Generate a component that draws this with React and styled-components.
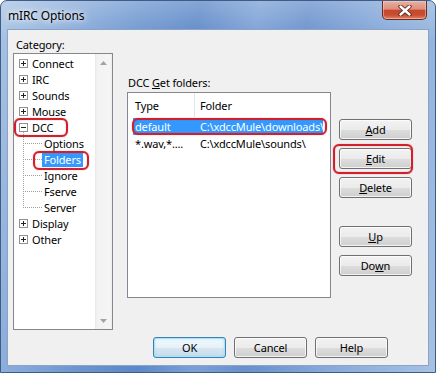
import React from "react";
import styled, { createGlobalStyle } from "styled-components";

const GlobalStyle = createGlobalStyle`
  html, body {
    margin: 0;
    padding: 0;
    background: #fff;
  }
  body {
    font-family: "Noto Sans", "Open Sans", sans-serif;
    font-size: 11px;
    letter-spacing: -0.15px;
    color: #000;
  }
`;

const Window = styled.div`
  width: 436px;
  height: 373px;
  box-sizing: border-box;
  border: 1px solid #3d5c86;
  border-radius: 7px 7px 0 0;
  background:
    linear-gradient(180deg, rgba(255, 255, 255, 0.25) 0%, rgba(255, 255, 255, 0) 40px),
    linear-gradient(
      100deg,
      #a9c3e3 0%,
      #8fb0dc 12%,
      #6d96cf 28%,
      #5c88c8 40%,
      #7ba0d5 52%,
      #6890cc 62%,
      #86a9d9 78%,
      #a6c1e3 100%
    );
  display: flex;
  flex-direction: column;
  overflow: hidden;
`;

const Titlebar = styled.div`
  height: 28px;
  flex: none;
  display: flex;
  align-items: flex-start;
  justify-content: space-between;
  padding: 0 8px 0 7px;
`;

const Title = styled.div`
  margin-top: 6px;
  font-size: 12px;
  color: #000;
  text-shadow: 0 0 5px #fff, 0 0 10px rgba(255, 255, 255, 0.9);
`;

const Close = styled.div`
  width: 45px;
  height: 19px;
  box-sizing: border-box;
  border: 1px solid #6b2c20;
  border-top: none;
  border-radius: 0 0 5px 5px;
  background: linear-gradient(
    180deg,
    #eab0a2 0%,
    #dc8f7c 45%,
    #c5482f 52%,
    #c94d31 78%,
    #e0866a 100%
  );
  box-shadow: inset 0 0 0 1px rgba(255, 220, 210, 0.45);
  display: flex;
  align-items: center;
  justify-content: center;
`;

const Body = styled.div`
  flex: 1;
  display: flex;
  padding: 0 6px 6px 6px;
`;

const Client = styled.div`
  flex: 1;
  display: flex;
  flex-direction: column;
  background: #f0f0f0;
  border: 1px solid #8ba3c4;
`;

const Main = styled.div`
  display: flex;
  align-items: flex-start;
  padding: 7px 0 0 5px;
`;

const LeftCol = styled.div`
  width: 100px;
  display: flex;
  flex-direction: column;
`;

const Label = styled.div`
  line-height: 16px;
  padding-left: ${(p) => p.$indent || 0}px;
  margin-bottom: ${(p) => p.$gap || 0}px;
`;

const Key = styled.span`
  text-decoration: underline;
`;

const Tree = styled.div`
  height: 277px;
  box-sizing: border-box;
  border: 1px solid #828790;
  background: #fff;
  display: flex;
`;

const TreeBody = styled.div`
  flex: 1;
  padding-top: 1px;
`;

const TreeRow = styled.div`
  height: 16px;
  display: flex;
  align-items: center;
`;

const Marked = styled.div`
  position: relative;
  display: flex;
  align-items: center;
`;

const Mark = styled.div`
  position: absolute;
  top: ${(p) => p.$t}px;
  left: ${(p) => p.$l}px;
  right: ${(p) => p.$r}px;
  bottom: ${(p) => p.$b}px;
  border: 2px solid #d1202b;
  border-radius: 6px;
  box-shadow: 0 0 1px rgba(210, 30, 40, 0.8), inset 0 0 1px rgba(210, 30, 40, 0.8);
  pointer-events: none;
`;

const NodeLabel = styled.span`
  padding: 0 2px;
  line-height: 15px;
  white-space: nowrap;
  background: ${(p) => (p.$selected ? "#3399ff" : "transparent")};
  color: ${(p) => (p.$selected ? "#fff" : "#000")};
`;

const Scrollbar = styled.div`
  width: 17px;
  flex: none;
  display: flex;
  flex-direction: column;
  justify-content: space-between;
  background: linear-gradient(90deg, #e6e6e6 0, #f3f3f3 2px, #f5f5f5 15px, #ececec 17px);
`;

const ScrollArrow = styled.div`
  height: 17px;
  display: flex;
  align-items: center;
  justify-content: center;
`;

const RightCol = styled.div`
  margin-left: 14px;
  padding-top: 38px;
  display: flex;
  flex-direction: column;
`;

const ListRow = styled.div`
  display: flex;
  align-items: flex-start;
`;

const List = styled.div`
  width: 204px;
  height: 206px;
  box-sizing: border-box;
  border: 1px solid #828790;
  background: #fff;
`;

const Header = styled.div`
  height: 24px;
  display: flex;
  align-items: stretch;
  margin-bottom: 1px;
`;

const HeadCell = styled.div`
  width: ${(p) => (p.$w ? `${p.$w}px` : "auto")};
  flex: ${(p) => (p.$w ? "none" : "1")};
  box-sizing: border-box;
  padding-left: ${(p) => p.$pad}px;
  display: flex;
  align-items: center;
  border-right: ${(p) => (p.$w ? "1px solid #e5e5e5" : "none")};
`;

const ItemRow = styled.div`
  margin-left: 5px;
  width: 190px;
  height: 17px;
  display: flex;
  align-items: center;
  position: relative;
  background: ${(p) => (p.$selected ? "#3399ff" : "transparent")};
  color: ${(p) => (p.$selected ? "#fff" : "#000")};
`;

const Cell = styled.div`
  width: ${(p) => (p.$w ? `${p.$w}px` : "auto")};
  flex: ${(p) => (p.$w ? "none" : "1")};
  box-sizing: border-box;
  padding-left: ${(p) => p.$pad}px;
  white-space: nowrap;
`;

const SideButtons = styled.div`
  margin: 27px 0 0 8px;
  display: flex;
  flex-direction: column;
  gap: 8px;
`;

const Button = styled.div`
  position: relative;
  width: 73px;
  height: 21px;
  box-sizing: border-box;
  margin-top: ${(p) => p.$push || 0}px;
  border: 1px solid ${(p) => (p.$default ? "#3c7fb1" : "#707070")};
  border-radius: 3px;
  background: ${(p) =>
    p.$default
      ? "linear-gradient(180deg, #f1f8fc 0%, #e6f1f8 50%, #d6e6f0 51%, #c8dceb 100%)"
      : "linear-gradient(180deg, #f2f2f2 0%, #ebebeb 50%, #dddddd 51%, #cfcfcf 100%)"};
  box-shadow: ${(p) =>
    p.$default
      ? "inset 0 0 0 1px #a7e3fa, inset 0 0 3px #6fd3f7"
      : "inset 0 0 0 1px rgba(255, 255, 255, 0.75)"};
  display: flex;
  align-items: center;
  justify-content: center;
  line-height: 1;
`;

const Footer = styled.div`
  margin-top: auto;
  display: flex;
  justify-content: flex-end;
  gap: 8px;
  padding: 0 40px 7px 0;
`;

const Expander = ({ open }) => (
  <svg width="16" height="16" viewBox="0 0 16 16">
    <rect x="5.5" y="4.5" width="8" height="8" fill="#fff" stroke="#919191" />
    <line x1="7" y1="8.5" x2="12" y2="8.5" stroke="#222" />
    {!open && <line x1="9.5" y1="6" x2="9.5" y2="11" stroke="#222" />}
    {open && (
      <line x1="9.5" y1="13" x2="9.5" y2="16" stroke="#a0a0a0" strokeDasharray="1 1" />
    )}
  </svg>
);

const Connector = ({ last }) => (
  <svg width="28" height="16" viewBox="0 0 28 16">
    <line
      x1="9.5"
      y1="0"
      x2="9.5"
      y2={last ? 9 : 16}
      stroke="#a0a0a0"
      strokeDasharray="1 1"
    />
    <line x1="11" y1="8.5" x2="28" y2="8.5" stroke="#a0a0a0" strokeDasharray="1 1" />
  </svg>
);

const Arrow = ({ up }) => (
  <svg width="7" height="4" viewBox="0 0 7 4">
    <path d={up ? "M3.5 0 L7 4 L0 4 Z" : "M0 0 L7 0 L3.5 4 Z"} fill="#a3a3a3" />
  </svg>
);

const categories = [
  { label: "Connect" },
  { label: "IRC" },
  { label: "Sounds" },
  { label: "Mouse" },
  {
    label: "DCC",
    open: true,
    marked: true,
    children: ["Options", "Folders", "Ignore", "Fserve", "Server"],
  },
  { label: "Display" },
  { label: "Other" },
];

const folders = [
  { type: "default", folder: "C:\\xdccMule\\downloads\\", selected: true },
  { type: "*.wav,*....", folder: "C:\\xdccMule\\sounds\\" },
];

export default function App() {
  return (
    <>
      <GlobalStyle />
      <Window>
        <Titlebar>
          <Title>mIRC Options</Title>
          <Close>
            <svg width="14" height="11" viewBox="0 0 14 11">
              <path d="M2.5 1.5 L11.5 9.5 M11.5 1.5 L2.5 9.5" stroke="#5a2219" strokeWidth="4.2" strokeLinecap="round" />
              <path d="M2.5 1.5 L11.5 9.5 M11.5 1.5 L2.5 9.5" stroke="#fff" strokeWidth="2.4" strokeLinecap="round" />
            </svg>
          </Close>
        </Titlebar>
        <Body>
          <Client>
            <Main>
              <LeftCol>
                <Label $indent={3}>Category:</Label>
                <Tree>
                  <TreeBody>
                    {categories.map((c) => (
                      <React.Fragment key={c.label}>
                        <TreeRow>
                          {c.marked ? (
                            <Marked>
                              <Expander open={c.open} />
                              <NodeLabel>{c.label}</NodeLabel>
                              <Mark $t={-1} $l={0} $r={-13} $b={-2} />
                            </Marked>
                          ) : (
                            <>
                              <Expander open={c.open} />
                              <NodeLabel>{c.label}</NodeLabel>
                            </>
                          )}
                        </TreeRow>
                        {c.children &&
                          c.children.map((child, i) => (
                            <TreeRow key={child}>
                              <Connector last={i === c.children.length - 1} />
                              {child === "Folders" ? (
                                <Marked>
                                  <NodeLabel $selected>{child}</NodeLabel>
                                  <Mark $t={-1} $l={-9} $r={-6} $b={-3} />
                                </Marked>
                              ) : (
                                <NodeLabel>{child}</NodeLabel>
                              )}
                            </TreeRow>
                          ))}
                      </React.Fragment>
                    ))}
                  </TreeBody>
                  <Scrollbar>
                    <ScrollArrow>
                      <Arrow up />
                    </ScrollArrow>
                    <ScrollArrow>
                      <Arrow />
                    </ScrollArrow>
                  </Scrollbar>
                </Tree>
              </LeftCol>
              <RightCol>
                <Label $indent={1} $gap={1}>
                  DCC <Key>G</Key>et folders:
                </Label>
                <ListRow>
                  <List>
                    <Header>
                      <HeadCell $w={67} $pad={7}>
                        Type
                      </HeadCell>
                      <HeadCell $pad={5}>Folder</HeadCell>
                    </Header>
                    {folders.map((f) => (
                      <ItemRow key={f.folder} $selected={f.selected}>
                        <Cell $w={62} $pad={2}>
                          {f.type}
                        </Cell>
                        <Cell $pad={5}>{f.folder}</Cell>
                        {f.selected && <Mark $t={0} $l={-1} $r={-4} $b={0} />}
                      </ItemRow>
                    ))}
                  </List>
                  <SideButtons>
                    <Button>
                      <Key>A</Key>dd
                    </Button>
                    <Button>
                      <Key>E</Key>dit
                      <Mark $t={-5} $l={-7} $r={-2} $b={-6} />
                    </Button>
                    <Button>
                      <Key>D</Key>elete
                    </Button>
                    <Button $push={20}>
                      <Key>U</Key>p
                    </Button>
                    <Button>
                      Do<Key>w</Key>n
                    </Button>
                  </SideButtons>
                </ListRow>
              </RightCol>
            </Main>
            <Footer>
              <Button $default>OK</Button>
              <Button>Cancel</Button>
              <Button>Help</Button>
            </Footer>
          </Client>
        </Body>
      </Window>
    </>
  );
}
